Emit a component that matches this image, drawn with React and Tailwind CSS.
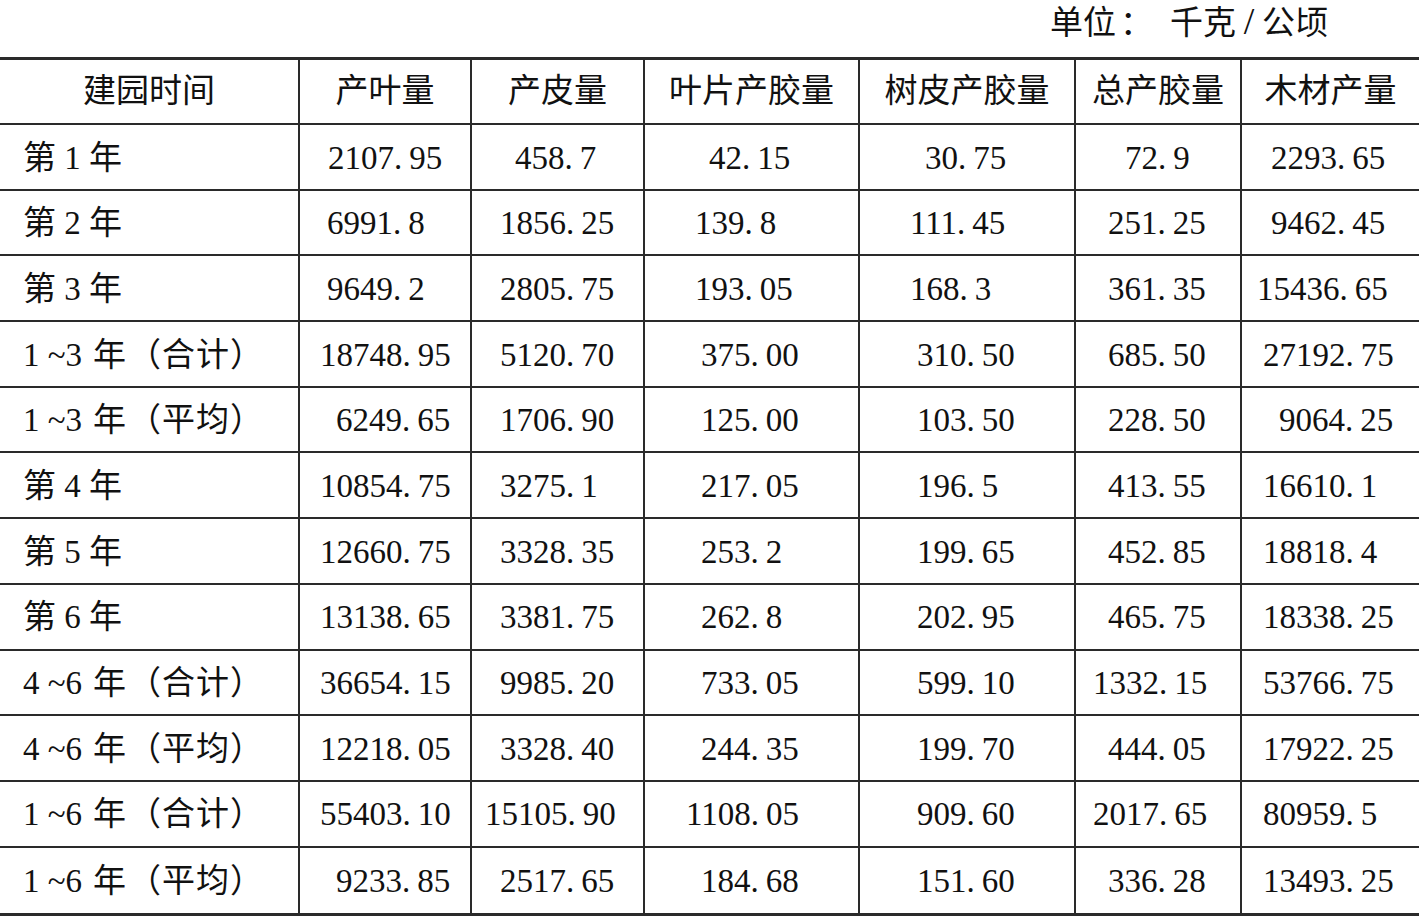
const starts = [0, 300, 472, 645, 860, 1076, 1242];

const heads = ["建园时间", "产叶量", "产皮量", "叶片产胶量", "树皮产胶量", "总产胶量", "木材产量"];

// each value carries the x where its text starts in the table
const rows = [
  ["第 1 年", ["2107.95", 328], ["458.7", 515], ["42.15", 709], ["30.75", 925], ["72.9", 1125], ["2293.65", 1271]],
  ["第 2 年", ["6991.8", 327], ["1856.25", 500], ["139.8", 695], ["111.45", 910], ["251.25", 1108], ["9462.45", 1271]],
  ["第 3 年", ["9649.2", 327], ["2805.75", 500], ["193.05", 695], ["168.3", 910], ["361.35", 1108], ["15436.65", 1257]],
  ["1 ~3 年（合计）", ["18748.95", 320], ["5120.70", 500], ["375.00", 701], ["310.50", 917], ["685.50", 1108], ["27192.75", 1263]],
  ["1 ~3 年（平均）", ["6249.65", 336], ["1706.90", 500], ["125.00", 701], ["103.50", 917], ["228.50", 1108], ["9064.25", 1279]],
  ["第 4 年", ["10854.75", 320], ["3275.1", 500], ["217.05", 701], ["196.5", 917], ["413.55", 1108], ["16610.1", 1263]],
  ["第 5 年", ["12660.75", 320], ["3328.35", 500], ["253.2", 701], ["199.65", 917], ["452.85", 1108], ["18818.4", 1263]],
  ["第 6 年", ["13138.65", 320], ["3381.75", 500], ["262.8", 701], ["202.95", 917], ["465.75", 1108], ["18338.25", 1263]],
  ["4 ~6 年（合计）", ["36654.15", 320], ["9985.20", 500], ["733.05", 701], ["599.10", 917], ["1332.15", 1093], ["53766.75", 1263]],
  ["4 ~6 年（平均）", ["12218.05", 320], ["3328.40", 500], ["244.35", 701], ["199.70", 917], ["444.05", 1108], ["17922.25", 1263]],
  ["1 ~6 年（合计）", ["55403.10", 320], ["15105.90", 485], ["1108.05", 686], ["909.60", 917], ["2017.65", 1093], ["80959.5", 1263]],
  ["1 ~6 年（平均）", ["9233.85", 336], ["2517.65", 500], ["184.68", 701], ["151.60", 917], ["336.28", 1108], ["13493.25", 1263]],
];

const grid = "grid grid-cols-[300px_172px_173px_215px_216px_166px_177px]";

const Num = ({ v }) => {
  const [a, b] = v.split(".");
  return (
    <span>
      {a}.<span className="ml-[7px]">{b}</span>
    </span>
  );
};

// "1 ~3 年（合计）" -> head part and the bracketed note, spaced like the print
const Label = ({ t }) => {
  const i = t.indexOf("（");
  if (i < 0) return <span>{t}</span>;
  return (
    <span>
      {t.slice(0, i).replace(" 年", "")}
      <span className="ml-[11px]">年</span>
      <span className="ml-[2px] tracking-[1px]">{t.slice(i)}</span>
    </span>
  );
};

export default function App() {
  return (
    <div
      className="w-[1419px] h-[919px] bg-white text-[#111] overflow-hidden"
      style={{ fontFamily: '"Liberation Serif", "Noto Sans CJK SC", serif' }}
    >
      <div className="h-[57px] flex justify-end items-baseline pr-[91px] pt-[2px] text-[33px] leading-[38px] whitespace-nowrap">
        <span>单位</span>
        <span className="w-[54px] pl-[4px]">：</span>
        <span>千克</span>
        <span className="w-[26px] text-center text-[38px] leading-[38px]">/</span>
        <span>公顷</span>
      </div>

      <div className="border-y-[3px] border-[#2a2a2a] text-[33px]">
        <div className={`${grid} h-[65px] border-b-2 border-[#2a2a2a]`}>
          {heads.map((h, i) => (
            <div
              key={h}
              className={`flex items-center justify-center pt-[1px] ${i < 6 ? "border-r-2 border-[#2a2a2a]" : ""}`}
            >
              {h}
            </div>
          ))}
        </div>

        {rows.map((r, ri) => (
          <div
            key={ri}
            className={`${grid} h-[65.7px] ${ri < rows.length - 1 ? "border-b-2 border-[#2a2a2a]" : ""}`}
          >
            <div className="flex items-center pl-[23px] pt-[3px] border-r-2 border-[#2a2a2a] whitespace-pre">
              <Label t={r[0]} />
            </div>
            {r.slice(1).map(([v, x], ci) => (
              <div
                key={ci}
                className={`flex items-center pt-[3px] whitespace-nowrap ${ci < 5 ? "border-r-2 border-[#2a2a2a]" : ""}`}
                style={{ paddingLeft: x - starts[ci + 1] }}
              >
                <Num v={v} />
              </div>
            ))}
          </div>
        ))}
      </div>
    </div>
  );
}
